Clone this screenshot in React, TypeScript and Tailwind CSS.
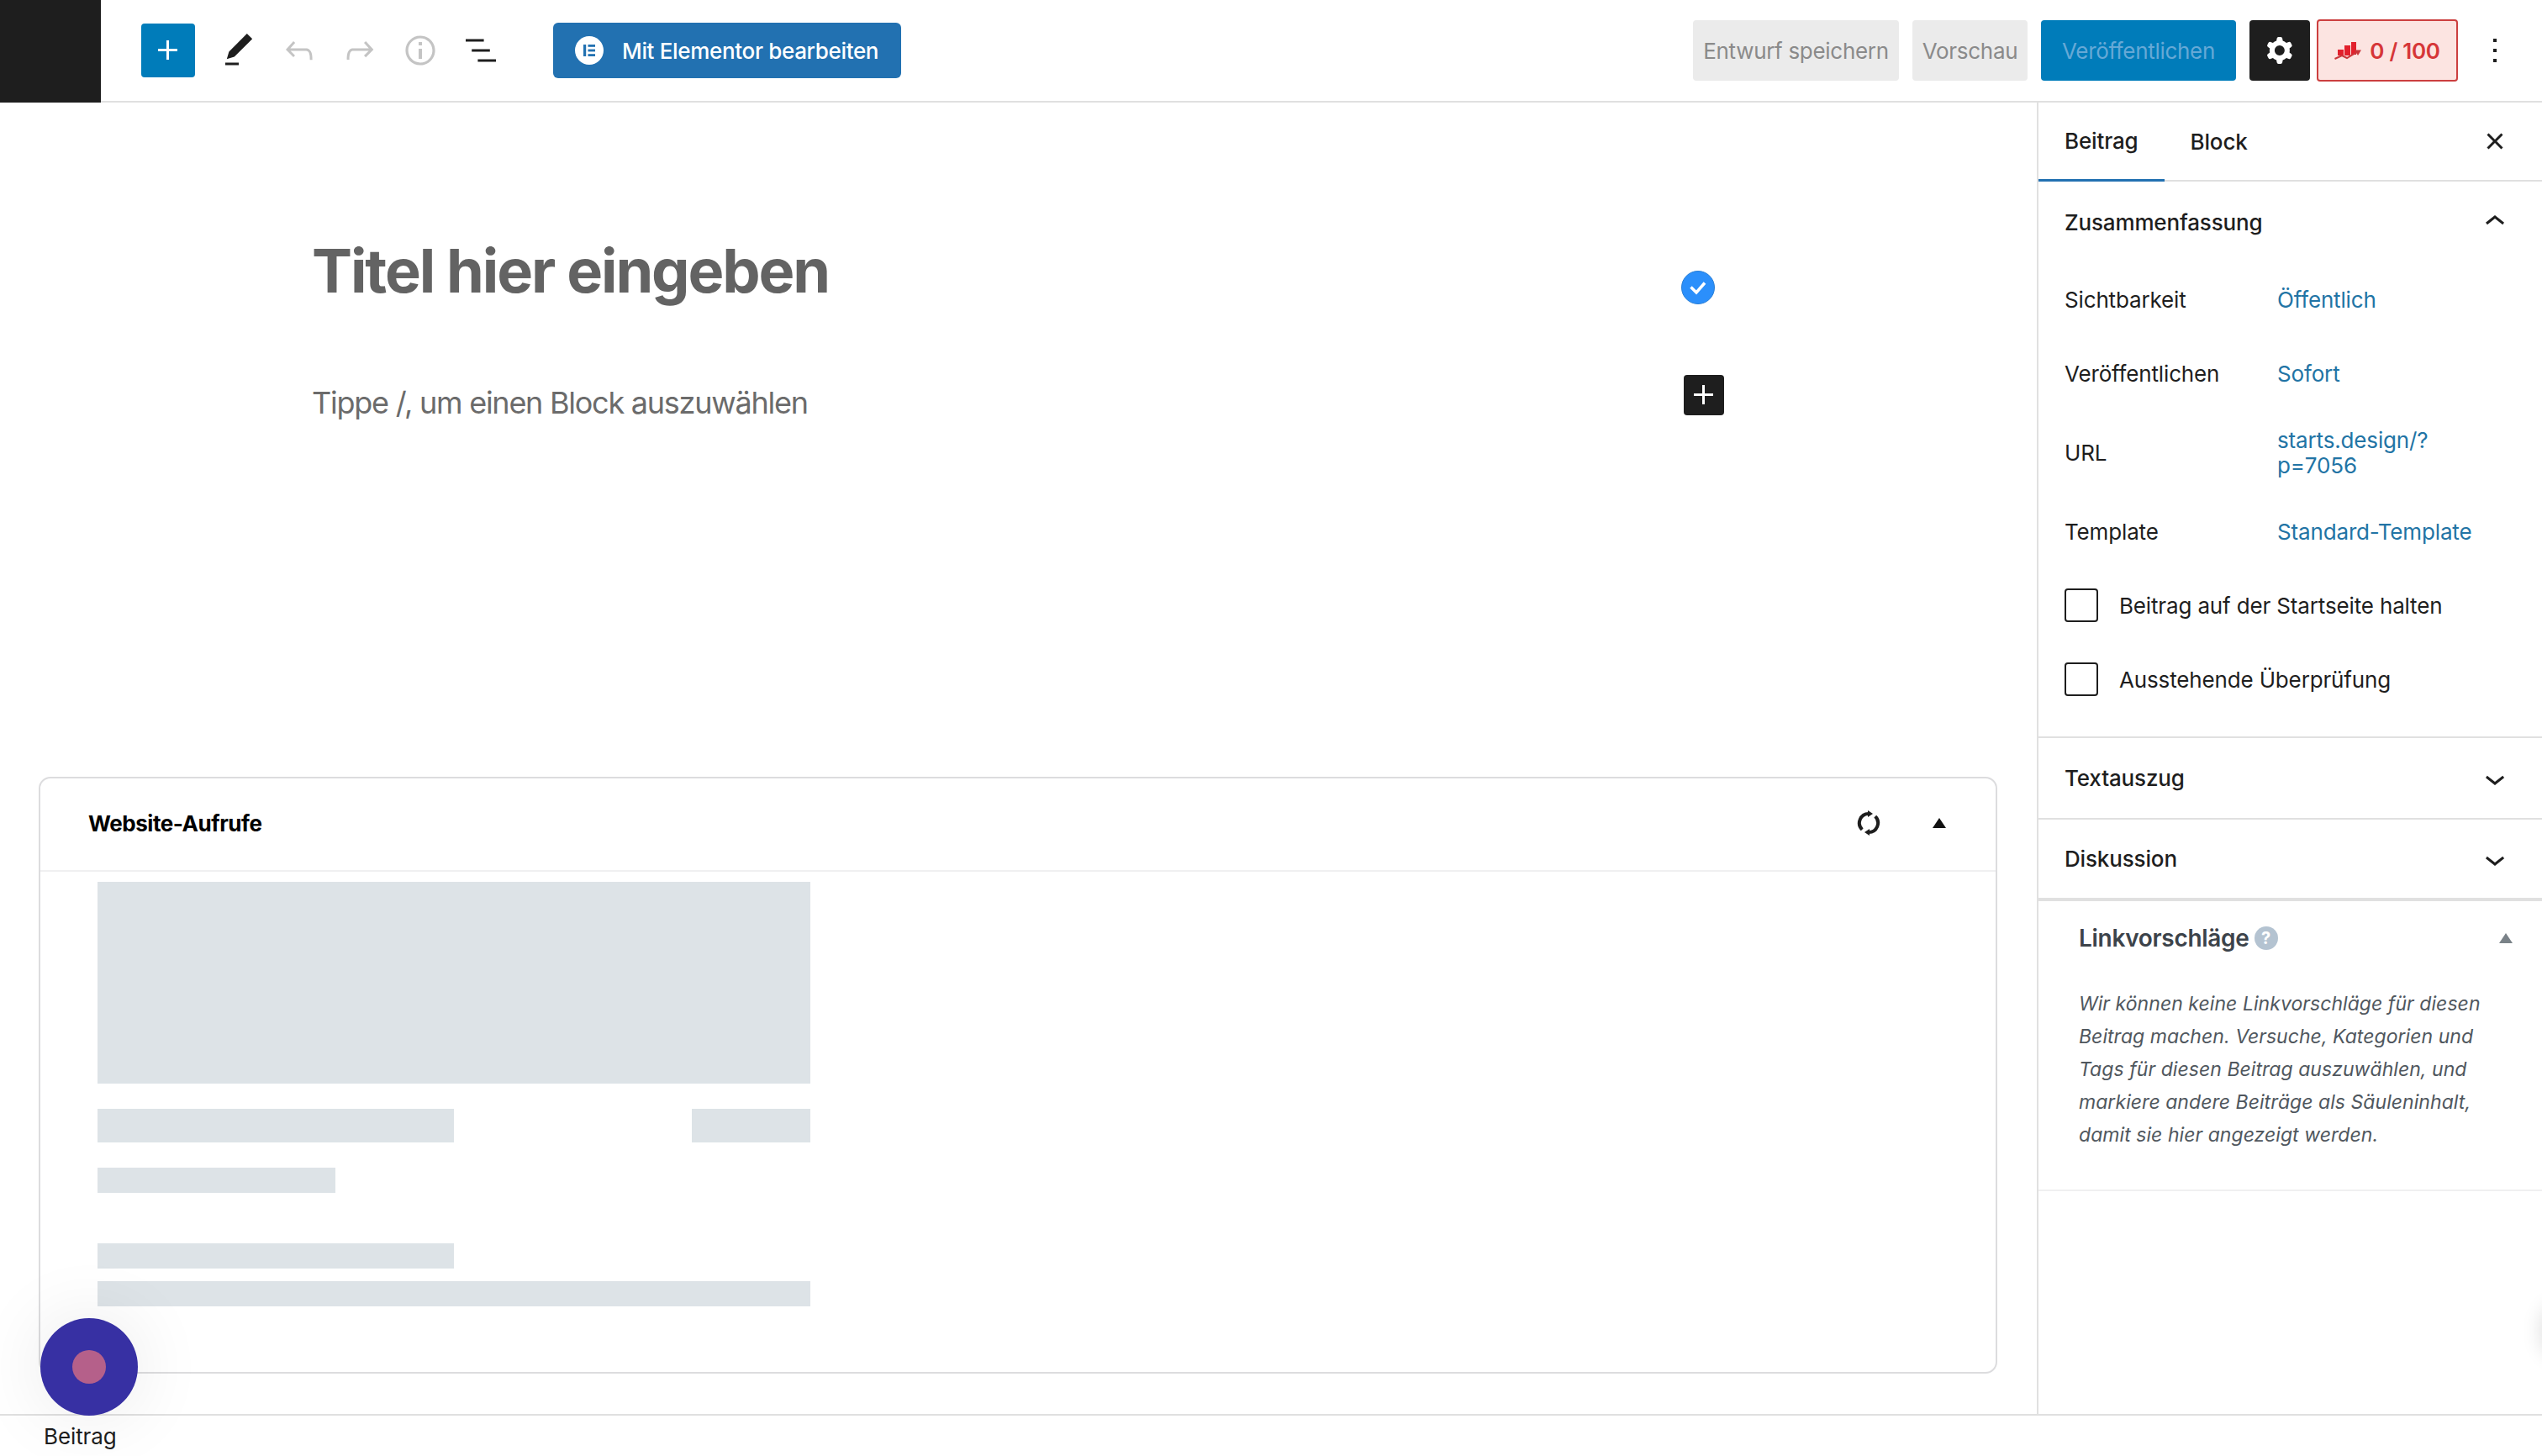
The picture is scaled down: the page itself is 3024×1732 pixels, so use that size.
import React from "react";

type IconProps = { d: string; className?: string; evenodd?: boolean };

const Icon: React.FC<IconProps> = ({ d, className = "", evenodd }) => (
  <svg viewBox="0 0 24 24" className={`w-[48px] h-[48px] fill-current ${className}`}>
    <path d={d} fillRule={evenodd ? "evenodd" : undefined} clipRule={evenodd ? "evenodd" : undefined} />
  </svg>
);

const icons = {
  plus: "M11 12.5V17.5H12.5V12.5H17.5V11H12.5V6H11V11H6V12.5H11Z",
  pen: "M20.1 5.1L16.9 2 6.2 12.7l-1.3 4.4 4.5-1.3L20.1 5.1zM4 20.8h8v-1.5H4v1.5z",
  undo: "M18.3 11.7c-.6-.6-1.4-.9-2.3-.9H6.7l2.9-3.3-1.1-1-4.5 5L8.5 16l1-1-2.7-2.7H16c.5 0 .9.2 1.3.5 1 1 1 3.4 1 4.5v.3h1.5v-.2c0-1.5 0-4.3-1.5-5.7z",
  redo: "M15.6 6.5l-1.1 1 2.9 3.3H8c-.9 0-1.7.3-2.3.9-1.4 1.5-1.4 4.2-1.4 5.6v.2h1.5v-.3c0-1.1 0-3.5 1-4.5.3-.3.7-.5 1.3-.5h9.2L14.5 15l1.1 1.1 4.6-4.6-4.6-5z",
  info: "M12 3.2c-4.8 0-8.8 3.9-8.8 8.8 0 4.8 3.9 8.8 8.8 8.8 4.8 0 8.8-3.9 8.8-8.8 0-4.8-4-8.8-8.8-8.8zm0 16c-4 0-7.2-3.3-7.2-7.2C4.8 8 8 4.8 12 4.8s7.2 3.3 7.2 7.2c0 4-3.2 7.2-7.2 7.2zM11 17h2v-6h-2v6zm0-8h2V7h-2v2z",
  list: "M13.8 5.2H3v1.5h10.8V5.2zm-3.6 12v1.5H21v-1.5H10.2zm7.2-6H6.6v1.5h10.8v-1.5z",
  cog: "M10.289 4.836A1 1 0 0111.275 4h1.306a1 1 0 01.987.836l.244 1.466c.787.26 1.503.679 2.108 1.218l1.393-.522a1 1 0 011.216.437l.653 1.13a1 1 0 01-.23 1.273l-1.148.944a6.025 6.025 0 010 2.435l1.149.946a1 1 0 01.23 1.272l-.653 1.13a1 1 0 01-1.216.437l-1.394-.522c-.605.54-1.32.958-2.108 1.218l-.244 1.466a1 1 0 01-.987.836h-1.306a1 1 0 01-.986-.836l-.244-1.466a5.995 5.995 0 01-2.108-1.218l-1.394.522a1 1 0 01-1.217-.436l-.653-1.131a1 1 0 01.23-1.272l1.149-.946a6.026 6.026 0 010-2.435l-1.148-.944a1 1 0 01-.23-1.272l.653-1.131a1 1 0 011.217-.437l1.393.522a5.994 5.994 0 012.108-1.218l.244-1.466zM14.929 12a3 3 0 11-6 0 3 3 0 016 0z",
  more: "M13 19h-2v-2h2v2zm0-6h-2v-2h2v2zm0-6h-2V5h2v2z",
  close: "M12 13.06l3.712 3.713 1.061-1.06L13.061 12l3.712-3.712-1.06-1.06L12 10.938 8.288 7.227l-1.061 1.06L10.939 12l-3.712 3.712 1.06 1.061L12 13.061z",
  chevronUp: "M6.5 12.4L12 8l5.5 4.4-.9 1.2L12 10l-4.5 3.6-1-1.2z",
  chevronDown: "M17.5 11.6L12 16l-5.5-4.4.9-1.2L12 14l4.6-3.6 1 1.2z",
};

const ElementorLogo = () => (
  <svg viewBox="0 0 34 34" className="w-[34px] h-[34px]">
    <circle cx="17" cy="17" r="17" fill="#fff" />
    <rect x="10" y="10" width="3.2" height="14" fill="#2271b1" />
    <rect x="15.5" y="10" width="8.5" height="2.8" fill="#2271b1" />
    <rect x="15.5" y="15.6" width="8.5" height="2.8" fill="#2271b1" />
    <rect x="15.5" y="21.2" width="8.5" height="2.8" fill="#2271b1" />
  </svg>
);

const ScoreIcon = () => (
  <svg viewBox="0 0 32 22" className="w-[32px] h-[22px]">
    <rect x="4" y="10" width="7" height="7" fill="#e2202c" />
    <rect x="12" y="5" width="7" height="12" fill="#e2202c" />
    <rect x="20" y="1" width="6" height="15" fill="#e2202c" />
    <path d="M0.5 21 L9 17 L15 20 L27 13" fill="none" stroke="#c9363a" strokeWidth="2" />
    <polygon points="24,10.5 32,10.5 28,17" fill="#c9363a" />
  </svg>
);

const SyncIcon = () => (
  <svg viewBox="-2 -2 30 30" className="w-[30px] h-[30px]">
    <path d="M5.2 20.8A11 11 0 0 1 13 2" fill="none" stroke="#1e1e1e" strokeWidth="4" />
    <path d="M20.8 5.2A11 11 0 0 1 13 24" fill="none" stroke="#1e1e1e" strokeWidth="4" />
    <polygon points="12,-2 18,2 12,6" fill="#1e1e1e" />
    <polygon points="14,20 8,24 14,28" fill="#1e1e1e" />
  </svg>
);

const ToolButton: React.FC<{ d: string; muted?: boolean }> = ({ d, muted }) => (
  <div className={`w-[64px] h-[64px] flex items-center justify-center ${muted ? "text-[#c4c4c4]" : "text-[#1e1e1e]"}`}>
    <Icon d={d} />
  </div>
);

const TopBar = () => (
  <header className="h-[122px] shrink-0 flex">
    <div className="w-[120px] h-[122px] bg-[#1e1e1e]" />
    <div className="flex-1 h-[122px] flex items-center border-b-2 border-[#e0e0e0]">
      <div className="ml-[48px] w-[64px] h-[64px] rounded-[4px] bg-[#007cba] text-white flex items-center justify-center">
        <Icon d={icons.plus} />
      </div>
      <div className="ml-[20px] flex gap-2">
        <ToolButton d={icons.pen} />
        <ToolButton d={icons.undo} muted />
        <ToolButton d={icons.redo} muted />
        <ToolButton d={icons.info} muted />
        <ToolButton d={icons.list} />
      </div>
      <div className="ml-[54px] w-[414px] h-[66px] rounded-[6px] bg-[#2271b1] text-white flex items-center pl-[26px] gap-[22px] text-[26px] font-medium tracking-[-0.33px]">
        <ElementorLogo />
        <span>Mit Elementor bearbeiten</span>
      </div>

      <div className="ml-auto flex items-center text-[26px] tracking-[-0.3px]">
        <div className="w-[245px] h-[72px] rounded-[4px] bg-[#ebebeb] text-[#8a8a8a] flex items-center justify-center">Entwurf speichern</div>
        <div className="ml-4 w-[137px] h-[72px] rounded-[4px] bg-[#ebebeb] text-[#8a8a8a] flex items-center justify-center">Vorschau</div>
        <div className="ml-4 w-[232px] h-[72px] rounded-[4px] bg-[#007cba] text-[#66a9d6] flex items-center justify-center">Veröffentlichen</div>
        <div className="ml-4 w-[72px] h-[72px] rounded-[4px] bg-[#1e1e1e] text-white flex items-center justify-center">
          <Icon d={icons.cog} evenodd />
        </div>
        <div className="ml-2 w-[168px] h-[74px] rounded-[4px] border-2 border-[#cc3f3f] bg-[#fce4e1] text-[#d63638] font-semibold flex items-center justify-center gap-[10px]">
          <ScoreIcon />
          <span>0 / 100</span>
        </div>
        <div className="ml-[20px] mr-[32px] text-[#1e1e1e]">
          <Icon d={icons.more} />
        </div>
      </div>
    </div>
  </header>
);

const Bar: React.FC<{ className: string }> = ({ className }) => <div className={`bg-[#dde3e7] ${className}`} />;

const ViewsCard = () => (
  <section className="ml-[46px] w-[2330px] h-[710px] rounded-[14px] border-2 border-[#dcdcde]">
    <div className="h-[111px] pb-[3px] pl-[57px] pr-[59px] flex items-center justify-between border-b-2 border-[#f0f0f1]">
      <h2 className="text-[26px] font-bold text-black tracking-[-0.45px]">Website-Aufrufe</h2>
      <div className="flex items-center gap-[61px]">
        <SyncIcon />
        <svg viewBox="0 0 16 12" className="w-[16px] h-[12px]">
          <polygon points="8,0 16,12 0,12" fill="#111" />
        </svg>
      </div>
    </div>
    <div className="pl-[68px] pt-[12px] w-[916px] flex flex-col">
      <Bar className="h-[240px]" />
      <div className="mt-[30px] flex justify-between">
        <Bar className="w-[424px] h-[40px]" />
        <Bar className="w-[141px] h-[40px]" />
      </div>
      <Bar className="mt-[30px] w-[283px] h-[30px]" />
      <Bar className="mt-[60px] w-[424px] h-[30px]" />
      <Bar className="mt-[15px] h-[30px]" />
    </div>
  </section>
);

const Editor = () => (
  <main className="flex-1 min-w-0">
    <div className="h-[802px] pl-[371px] pt-[160px]">
      <div className="w-[1680px] h-[80px] flex justify-between pr-[11px]">
        <h1 className="text-[72px] leading-[80px] font-bold text-[#636363] tracking-[-2.1px]">Titel hier eingeben</h1>
        <div className="self-end w-[40px] h-[40px] rounded-full bg-[#2b8ffb] border border-[#2a7fd6] flex items-center justify-center">
          <svg viewBox="0 0 20 20" className="w-[20px] h-[20px]">
            <path d="M1.5 9.5 L8 16 L18 4.5" fill="none" stroke="#fff" strokeWidth="3.5" />
          </svg>
        </div>
      </div>
      <div className="mt-[84px] w-[1680px] h-[48px] flex items-center justify-between">
        <p className="mt-[18px] text-[36px] text-[#6b6b6b] tracking-[-1.25px]">Tippe /, um einen Block auszuwählen</p>
        <div className="w-[48px] h-[48px] rounded-[4px] bg-[#1e1e1e] text-white flex items-center justify-center">
          <Icon d={icons.plus} />
        </div>
      </div>
    </div>
    <ViewsCard />
  </main>
);

const SummaryRow: React.FC<{ label: string; height?: string; children: React.ReactNode }> = ({ label, height = "h-[72px]", children }) => (
  <div className={`${height} flex items-center`}>
    <div className="w-[253px] shrink-0">{label}</div>
    <div className="mt-[1px] text-[#2274a5] leading-[30px]">{children}</div>
  </div>
);

const CheckRow: React.FC<{ label: string }> = ({ label }) => (
  <div className="h-[72px] flex items-center gap-[25px]">
    <div className="w-[40px] h-[40px] rounded-[4px] border-2 border-[#1e1e1e]" />
    <span>{label}</span>
  </div>
);

const CollapsedPanel: React.FC<{ title: string; border: string }> = ({ title, border }) => (
  <div className={`h-[97px] pl-[31px] pr-[32px] flex items-center justify-between font-medium ${border}`}>
    <span>{title}</span>
    <Icon d={icons.chevronDown} className="text-[#1e1e1e]" />
  </div>
);

const Sidebar = () => (
  <aside className="w-[601px] shrink-0 border-l-2 border-[#e0e0e0] text-[26px] text-[#1e1e1e] tracking-[-0.15px]">
    <div className="h-[94px] flex justify-between border-b-2 border-[#e0e0e0] font-medium">
      <div className="flex">
        <div className="h-[94px] px-[31px] flex items-center border-b-[3px] border-[#2271b1]">Beitrag</div>
        <div className="h-[92px] px-[31px] flex items-center">Block</div>
      </div>
      <div className="h-[92px] pr-[32px] flex items-center">
        <Icon d={icons.close} />
      </div>
    </div>

    <div className="border-b-2 border-[#e0e0e0] pb-[32px]">
      <div className="h-[96px] pl-[31px] pr-[32px] flex items-center justify-between font-medium">
        <span>Zusammenfassung</span>
        <Icon d={icons.chevronUp} />
      </div>
      <div className="pl-[31px] pt-[8px] flex flex-col gap-4">
        <SummaryRow label="Sichtbarkeit">Öffentlich</SummaryRow>
        <SummaryRow label="Veröffentlichen">Sofort</SummaryRow>
        <SummaryRow label="URL" height="h-[84px]">
          starts.design/?
          <br />
          p=7056
        </SummaryRow>
        <SummaryRow label="Template">Standard-Template</SummaryRow>
        <CheckRow label="Beitrag auf der Startseite halten" />
        <CheckRow label="Ausstehende Überprüfung" />
      </div>
    </div>

    <CollapsedPanel title="Textauszug" border="border-b-2 border-[#e0e0e0]" />
    <CollapsedPanel title="Diskussion" border="border-b-4 border-[#e0e0e0]" />

    <div className="pl-[48px] pr-[35px] pb-[45px] border-b-2 border-[#f0f0f1]">
      <div className="h-[88px] flex items-center justify-between">
        <div className="flex items-center gap-[6px] text-[28px] font-semibold text-[#3c434a] tracking-[-0.3px]">
          <span>Linkvorschläge</span>
          <span className="w-[28px] h-[28px] rounded-full bg-[#b4c3d1] text-white text-[20px] font-bold flex items-center justify-center">?</span>
        </div>
        <svg viewBox="0 0 16 12" className="w-[16px] h-[12px]">
          <polygon points="8,0 16,12 0,12" fill="#7a8288" />
        </svg>
      </div>
      <p className="pt-[15px] text-[23px] leading-[39px] italic text-[#50575e] whitespace-nowrap tracking-[0.05px]">
        Wir können keine Linkvorschläge für diesen
        <br />
        Beitrag machen. Versuche, Kategorien und
        <br />
        Tags für diesen Beitrag auszuwählen, und
        <br />
        markiere andere Beiträge als Säuleninhalt,
        <br />
        damit sie hier angezeigt werden.
      </p>
    </div>
  </aside>
);

export default function App() {
  return (
    <div className="relative w-[3024px] h-[1732px] overflow-hidden bg-white flex flex-col font-['Inter','Liberation_Sans',sans-serif]">
      <TopBar />
      <div className="h-[1560px] shrink-0 flex">
        <Editor />
        <Sidebar />
      </div>
      <footer className="flex-1 pl-[52px] flex items-center border-t-2 border-[#e0e0e0] text-[26px] text-[#1e1e1e] tracking-[-0.1px]">Beitrag</footer>

      {/* floating widget, sits over the card and the footer line */}
      <div className="absolute left-[48px] top-[1568px] w-[116px] h-[116px] rounded-full bg-[#3730a3] shadow-[0_0_90px_rgba(0,0,0,0.09)] flex items-center justify-center">
        <div className="w-[40px] h-[40px] rounded-full bg-[#b5608a]" />
      </div>
      {/* off-canvas launcher, only its shadow shows at the right edge */}
      <div className="absolute left-[3024px] top-[1553px] w-[40px] h-[60px] rounded-full shadow-[0_0_24px_rgba(0,0,0,0.14)]" />
    </div>
  );
}
